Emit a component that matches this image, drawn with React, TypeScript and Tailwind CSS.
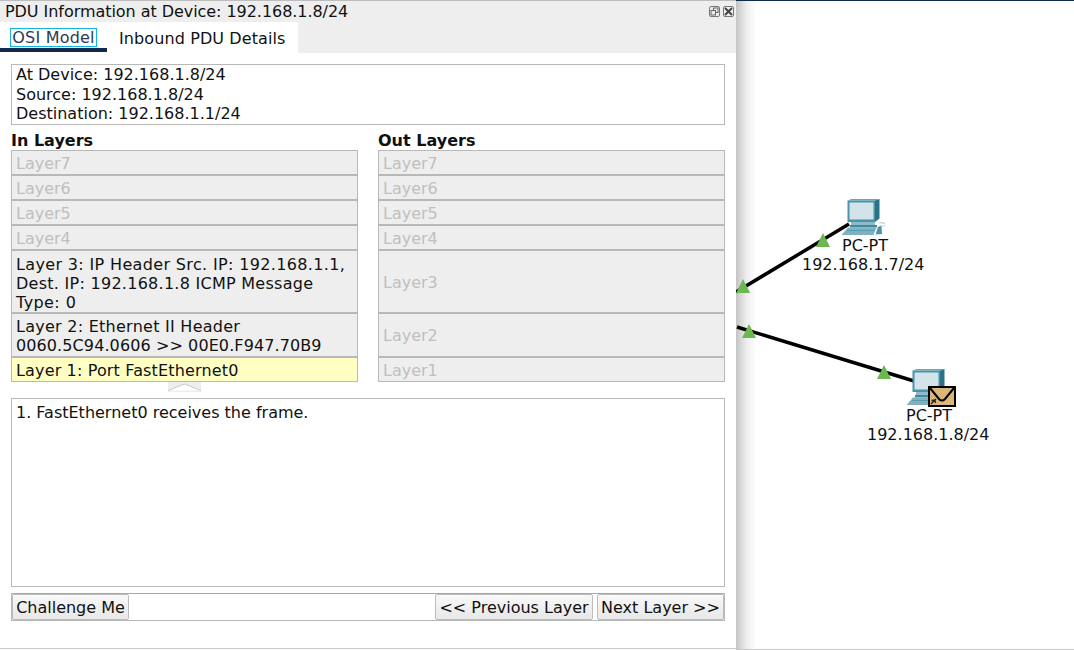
import React from "react";

const font = { fontFamily: '"DejaVu Sans", sans-serif' };

function Row({ h, children, active, off }: { h: string; children: React.ReactNode; active?: boolean; off?: boolean }) {
  return (
    <div
      className={`${h} flex flex-col justify-center border border-[#b8b8b8] px-1 pt-[3px] text-[16px] leading-[18.5px] ${
        active ? "bg-[#ffffc4]" : "bg-[#eeeeee]"
      } ${off ? "text-[#bfbfbf]" : "text-[#111]"}`}
    >
      {children}
    </div>
  );
}

function Pc({ className }: { className: string }) {
  return (
    <svg className={className} viewBox="0 0 60 50" fill="none">
      <path d="M12.5 10.5 L16.5 9 L44.5 9 L40 10.5 Z" fill="#6aa6b8" />
      <path d="M40 10.5 L44.5 9 L44.5 28.5 L40 32 Z" fill="#2b7288" />
      <rect x="12.5" y="10.5" width="27.5" height="21.5" fill="#4a93a8" />
      <rect x="14.5" y="12.5" width="24" height="17" fill="#d2e3ea" />
      <path d="M16 32 L40 32 L40 35 L16 35 Z" fill="#8dbcc9" />
      <path d="M15 35 L42 35 L42 37.5 L15 37.5 Z" fill="#3f8aa0" />
      <path d="M13 37.5 L41.5 37.5 L38.5 45 L6.5 45 Z" fill="#7fb1c1" />
      <path d="M12 40.5 L40 40.5" stroke="#5b9bae" strokeWidth="1" />
      <path d="M40.5 44.5 L43 37 L46.5 35.5 L47 44 Z" fill="#4f94a8" />
      <path d="M44 33 Q47 32 50 34 M47 36 L50 36" stroke="#b9d3dc" strokeWidth="1.2" />
    </svg>
  );
}

export default function App() {
  const layersL = ["Layer7", "Layer6", "Layer5", "Layer4"];
  return (
    <div className="relative flex h-[650px] w-[1074px] overflow-hidden bg-white text-[#111]" style={font}>
      {/* window */}
      <div className="relative z-10 flex h-[649px] w-[736px] flex-col border-b border-[#c8c8c8] bg-white">
        <div className="flex h-[22px] items-center justify-between border-t border-[#bdbdbd] bg-[#eeeeee] pl-[5px] pr-[2px] text-[16px]">
          <span className="text-[16px] leading-[20px] tracking-[-0.05px]">PDU Information at Device: 192.168.1.8/24</span>
          <div className="flex gap-[3px]">
            <span className="flex h-[11px] w-[11px] items-center justify-center rounded-[2px] border border-[#777]">
              <svg width="9" height="9" viewBox="0 0 9 9" fill="none" stroke="#666" strokeWidth="1">
                <rect x="3.5" y="1" width="4.5" height="4.5" />
                <rect x="1" y="3.5" width="4.5" height="4.5" fill="#eee" />
              </svg>
            </span>
            <span className="flex h-[11px] w-[11px] items-center justify-center rounded-[2px] border border-[#777]">
              <svg width="9" height="9" viewBox="0 0 9 9" fill="none" stroke="#444" strokeWidth="2">
                <path d="M1 1 L8 8 M8 1 L1 8" />
              </svg>
            </span>
          </div>
        </div>
        <div className="flex h-[31px] bg-[#eeeeee]">
          <div className="flex w-[298px] bg-white">
            <div className="h-[31px] w-[107px] pt-[6px]">
              <div className="ml-[10px] flex h-[19px] w-[87px] items-center justify-center border border-[#12b5e0] text-[16px] tracking-[0.2px] text-[#2a3a55]">
                OSI Model
              </div>
              <div className="mt-[1px] h-[4px] w-[107px] bg-[#0f2a4d]" />
            </div>
            <div className="pl-[12px] pt-[6px] text-[16px] leading-[21px] tracking-[0.1px]">Inbound PDU Details</div>
          </div>
        </div>
        <div className="flex flex-1 flex-col px-[11px] pt-[11px]">
          <div className="h-[61px] border border-[#b8b8b8] px-1 text-[16px] leading-[19px]">
            <div className="h-[20px]">At Device: 192.168.1.8/24</div>
            <div>Source: 192.168.1.8/24</div>
            <div>Destination: 192.168.1.1/24</div>
          </div>
          <div className="mt-[6px] flex gap-[20px]">
            <div className="w-[347px]">
              <div className="h-[19px] text-[16px] font-bold leading-[19px]">In Layers</div>
              {layersL.map((l) => (
                <Row key={l} h="h-[25px]" off>
                  {l}
                </Row>
              ))}
              <Row h="h-[63px]">
                <div className="leading-[19px] tracking-[0.35px]">Layer 3: IP Header Src. IP: 192.168.1.1,</div>
                <div className="leading-[19px] tracking-[0.27px]">Dest. IP: 192.168.1.8 ICMP Message</div>
                <div className="leading-[19px] tracking-[0.4px]">Type: 0</div>
              </Row>
              <Row h="h-[44px]">
                <div className="tracking-[0.26px]">Layer 2: Ethernet II Header</div>
                <div className="tracking-[0.1px]">0060.5C94.0606 &gt;&gt; 00E0.F947.70B9</div>
              </Row>
              <Row h="h-[25px]" active>
                <div className="tracking-[0.15px]">Layer 1: Port FastEthernet0</div>
              </Row>
            </div>
            <div className="w-[347px]">
              <div className="h-[19px] text-[16px] font-bold leading-[19px]">Out Layers</div>
              {layersL.map((l) => (
                <Row key={l} h="h-[25px]" off>
                  {l}
                </Row>
              ))}
              <Row h="h-[63px]" off>
                Layer3
              </Row>
              <Row h="h-[44px]" off>
                Layer2
              </Row>
              <Row h="h-[25px]" off>
                Layer1
              </Row>
            </div>
          </div>
          <div className="flex h-[16px] items-start pl-[157px]">
            <svg width="33" height="10" viewBox="0 0 33 10">
              <rect width="33" height="10" fill="#eeeeee" />
              <path d="M0 8.5 L16.5 2 L33 8.5" fill="#fff" stroke="#c8c8c8" strokeWidth="1" />
            </svg>
          </div>
          <div className="h-[189px] border border-[#b8b8b8] px-1 pt-[3px] text-[16px] leading-[21px]">
            1. FastEthernet0 receives the frame.
          </div>
          <div className="mt-[6px] flex h-[28px] items-stretch justify-between gap-[4px] border border-[#b8b8b8] border-t-[#a8a8a8] text-[16px]">
            <button className="w-[117px] rounded-[2px] border border-[#bcbcbc] bg-gradient-to-b from-[#f8f8f8] to-[#e8e8e8] pt-[1px] text-center">
              Challenge Me
            </button>
            <div className="flex gap-[4px]">
              <button className="w-[158px] rounded-[2px] border border-[#bcbcbc] bg-gradient-to-b from-[#f8f8f8] to-[#e8e8e8] pt-[1px]">
                &lt;&lt; Previous Layer
              </button>
              <button className="w-[127px] rounded-[2px] border border-[#bcbcbc] bg-gradient-to-b from-[#f8f8f8] to-[#e8e8e8] pt-[1px]">
                Next Layer &gt;&gt;
              </button>
            </div>
          </div>
        </div>
      </div>
      {/* canvas */}
      <div className="relative flex-1 border-b border-t border-b-[#c8c8c8] border-t-[#0f2a4d]">
        <div className="absolute bottom-0 left-0 top-0 w-[20px] bg-gradient-to-r from-[#c4c4c4] via-[#ececec] to-white" />
        <svg className="absolute left-0 top-[-1px]" width="338" height="650" viewBox="736 0 338 650" fill="none">
          <path d="M736 292 L849 224" stroke="#000" strokeWidth="3.5" />
          <path d="M737 327 L914 381" stroke="#000" strokeWidth="3.5" />
          <path d="M743 279 L750 293 L736 293 Z" fill="#6ab84f" />
          <path d="M823 233 L830 247 L816 247 Z" fill="#6ab84f" />
          <path d="M749 324 L756 338 L742 338 Z" fill="#6ab84f" />
          <path d="M884 365 L891 379 L877 379 Z" fill="#6ab84f" />
        </svg>
        <Pc className="absolute left-[99px] top-[189px] h-[50px] w-[60px]" />
        <Pc className="absolute left-[164px] top-[359px] h-[50px] w-[60px]" />
        <svg className="absolute left-[192px] top-[385px]" width="28" height="21" viewBox="0 0 28 21">
          <rect x="1" y="1" width="26" height="19" fill="#d9b779" stroke="#000" strokeWidth="2" />
          <path d="M2 2 L11 13 Q14 16 17 13 L26 2" stroke="#000" strokeWidth="2" fill="none" />
          <path d="M3 18 L8 13 M3.5 14.5 L7 14 L7.5 17" stroke="#222" strokeWidth="1.4" fill="none" />
        </svg>
        <div className="absolute left-[66px] top-[235px] w-[122px] text-center text-[16px] leading-[19px]">
          <div className="pl-[4px]">PC-PT</div>
          <div>192.168.1.7/24</div>
        </div>
        <div className="absolute left-[131px] top-[405px] w-[122px] text-center text-[16px] leading-[19px]">
          <div className="pl-[2px]">PC-PT</div>
          <div>192.168.1.8/24</div>
        </div>
      </div>
    </div>
  );
}
